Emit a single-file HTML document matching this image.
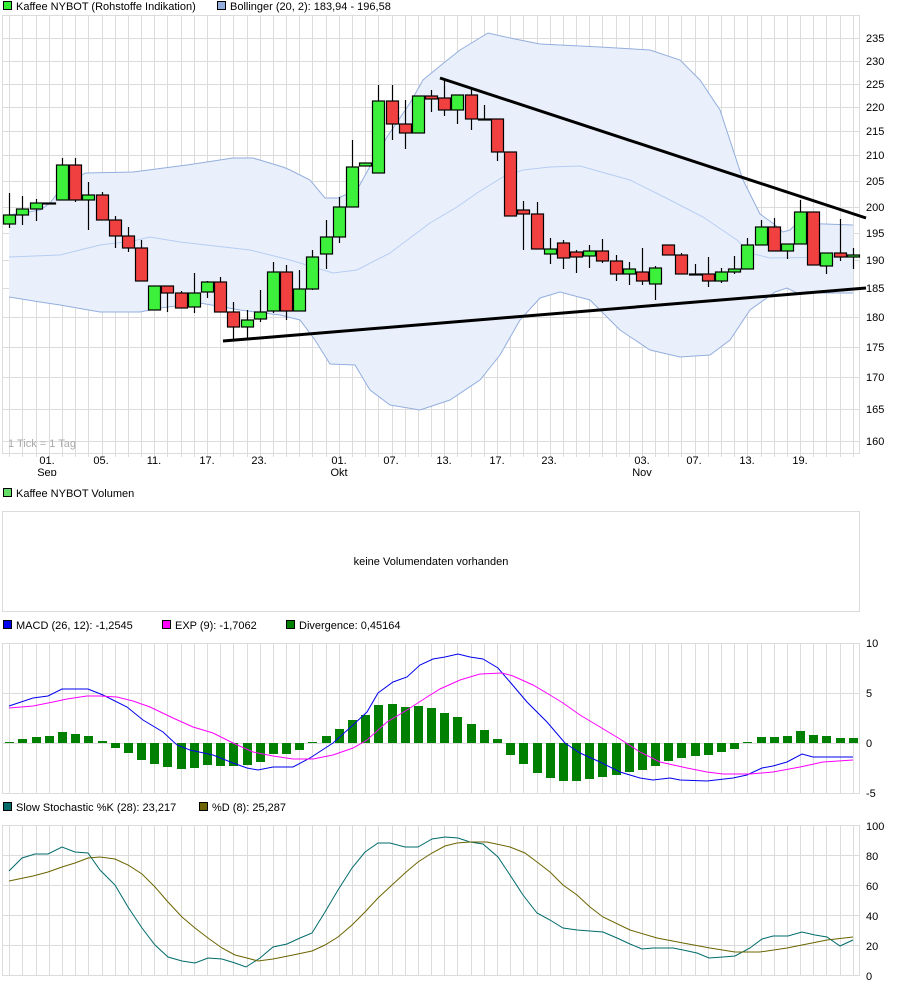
<!DOCTYPE html>
<html><head><meta charset="utf-8"><style>
html,body{margin:0;padding:0;background:#fff;width:907px;height:986px;overflow:hidden}
svg{display:block;font-family:"Liberation Sans",Arial,sans-serif;font-size:11px}
</style></head><body>
<svg id="s" width="907" height="986" viewBox="0 0 907 986" xmlns="http://www.w3.org/2000/svg">
<defs><clipPath id="dc"><rect x="0" y="453" width="907" height="23"/></clipPath></defs>
<g id="grid"></g>
<polygon id="band" fill="#e9f0fb" stroke="none"/>
<polyline id="bu" fill="none" stroke="#94aede" stroke-width="1"/>
<polyline id="bl" fill="none" stroke="#94aede" stroke-width="1"/>
<polyline id="bm" fill="none" stroke="#b6cdf4" stroke-width="1"/>
<g id="candles"></g>
<line x1="440" y1="78" x2="866" y2="218" stroke="#000" stroke-width="3"/>
<line x1="223" y1="341" x2="866" y2="288" stroke="#000" stroke-width="3"/>
<g id="macd"></g>
<polyline id="ml" fill="none" stroke="#0000ee" stroke-width="1"/>
<polyline id="el" fill="none" stroke="#ff00ff" stroke-width="1"/>
<polyline id="kl" fill="none" stroke="#006b6b" stroke-width="1"/>
<polyline id="dl" fill="none" stroke="#6b6400" stroke-width="1"/>

<!-- legends -->
<rect x="3.5" y="1.5" width="8" height="8" fill="#33ee33" stroke="#000"/>
<text x="16" y="10">Kaffee NYBOT (Rohstoffe Indikation)</text>
<rect x="217.5" y="1.5" width="8" height="8" fill="#94aede" stroke="#000"/>
<text x="230" y="10">Bollinger (20, 2): 183,94 - 196,58</text>
<text x="8" y="447" fill="#aaa">1 Tick = 1 Tag</text>

<rect x="3.5" y="488.5" width="8" height="8" fill="#66dd66" stroke="#000"/>
<text x="16" y="497">Kaffee NYBOT Volumen</text>
<rect x="2.5" y="511.5" width="857" height="100" fill="none" stroke="#dcdcdc"/>
<text x="431" y="565" text-anchor="middle">keine Volumendaten vorhanden</text>

<rect x="3.5" y="620.5" width="8" height="8" fill="#0000ee" stroke="#000"/>
<text x="16" y="629">MACD (26, 12): -1,2545</text>
<rect x="162.5" y="620.5" width="8" height="8" fill="#ff00ff" stroke="#000"/>
<text x="175" y="629">EXP (9): -1,7062</text>
<rect x="286.5" y="620.5" width="8" height="8" fill="#008000" stroke="#000"/>
<text x="299" y="629">Divergence: 0,45164</text>

<rect x="3.5" y="802.5" width="8" height="8" fill="#006b6b" stroke="#000"/>
<text x="16" y="811">Slow Stochastic %K (28): 23,217</text>
<rect x="199.5" y="802.5" width="8" height="8" fill="#6b6400" stroke="#000"/>
<text x="212" y="811">%D (8): 25,287</text>

<g id="labels">
<text x="866" y="42">235</text><text x="866" y="65">230</text><text x="866" y="88">225</text><text x="866" y="111">220</text>
<text x="866" y="135">215</text><text x="866" y="159">210</text><text x="866" y="185">205</text><text x="866" y="211">200</text>
<text x="866" y="237">195</text><text x="866" y="264">190</text><text x="866" y="292">185</text><text x="866" y="321">180</text>
<text x="866" y="351">175</text><text x="866" y="381">170</text><text x="866" y="413">165</text><text x="866" y="445">160</text>
<text x="866" y="647">10</text><text x="866" y="697">5</text><text x="866" y="747">0</text><text x="866" y="797">-5</text>
<text x="866" y="830">100</text><text x="866" y="860">80</text><text x="866" y="890">60</text><text x="866" y="920">40</text>
<text x="866" y="950">20</text><text x="866" y="980">0</text>
</g>
<g clip-path="url(#dc)" text-anchor="middle">
<text x="47" y="464">01.</text><text x="47" y="476">Sep</text>
<text x="101" y="464">05.</text><text x="154" y="464">11.</text><text x="207" y="464">17.</text><text x="259" y="464">23.</text>
<text x="339" y="464">01.</text><text x="339" y="476">Okt</text>
<text x="391" y="464">07.</text><text x="444" y="464">13.</text><text x="497" y="464">17.</text><text x="549" y="464">23.</text>
<text x="642" y="464">03.</text><text x="642" y="476">Nov</text>
<text x="694" y="464">07.</text><text x="747" y="464">13.</text><text x="800" y="464">19.</text>
</g>
</svg>
<script>
var NS="http://www.w3.org/2000/svg";
function el(p,t,a){var e=document.createElementNS(NS,t);for(var k in a)e.setAttribute(k,a[k]);p.appendChild(e);return e;}
function X(i){return 9.3+13.18*i;}
var g=document.getElementById('grid');
var G="#dcdcdc";
function panel(y0,y1,hs){
  for(var i=0;i<65;i++){var x=Math.round(X(i))+0.5;el(g,'line',{x1:x,y1:y0,x2:x,y2:y1,stroke:G});}
  hs.forEach(function(h){el(g,'line',{x1:2,y1:h+.5,x2:860,y2:h+.5,stroke:G});});
  el(g,'rect',{x:2.5,y:y0+.5,width:857,height:y1-y0,fill:'none',stroke:G});
}
panel(15,453,[38,61,84,107,131,155,181,207,233,260,288,317,347,377,409,441]);
for(var i=0;i<65;i++){var x=Math.round(X(i))+0.5;el(g,'line',{x1:x,y1:453,x2:x,y2:457,stroke:G});}
panel(643,793,[693,743]);
panel(825,975,[855,885,915,945]);
function pts(a){return a.map(function(p){return p[0]+','+p[1];}).join(' ');}
var up=[[9,215],[40,210],[50,203],[60,190],[85,173],[133,172],[187,165],[233,158],[253,158],[283,167],[290,170],[310,180],[325,198],[338,198],[357,190],[368,170],[387,137],[410,103],[423,80],[440,66],[460,50],[488,33],[510,38],[540,44],[600,47],[650,50],[680,60],[700,80],[720,110],[743,180],[760,214],[774,224],[783,232],[790,230],[797,223],[853,225]];
var lo=[[9,297],[40,302],[60,305],[100,312],[140,312],[160,308],[200,303],[240,310],[280,315],[300,320],[315,340],[330,364],[355,365],[370,390],[390,405],[420,410],[450,400],[480,380],[500,355],[520,320],[540,298],[560,292],[590,300],[620,330],[650,350],[680,357],[710,355],[730,340],[750,310],[775,292],[787,288],[797,293],[853,293]];
var mid=[[9,257],[60,255],[100,245],[133,241],[150,237],[180,242],[250,250],[290,260],[300,263],[333,273],[357,270],[390,253],[430,223],[457,207],[477,193],[503,177],[523,170],[550,167],[580,166],[630,180],[670,200],[703,217],[737,240],[750,253],[770,258],[853,257]];
document.getElementById('bu').setAttribute('points',pts(up));
document.getElementById('bl').setAttribute('points',pts(lo));
document.getElementById('bm').setAttribute('points',pts(mid));
document.getElementById('band').setAttribute('points',pts(up.concat(lo.slice().reverse())));
// candles: [o_top,body_bottom,high,low,green]
var C=[[215,224,193,228,1],[209,215,196,225,1],[203,209,199,221,1],[203,204,203,204,1],[165,200,158,200,1],[165,200,158,202,0],[195,200,182,230,1],[195,220,192,220,0],[220,236,216,248,0],[236,248,227,252,0],[248,281,240,281,0],[286,310,286,310,1],[286,293,286,312,0],[293,308,291,308,0],[293,307,273,313,1],[282,292,281,298,1],[282,312,277,312,0],[312,327,302,340,0],[320,327,310,340,1],[312,319,290,322,1],[272,311,262,313,1],[272,311,265,320,0],[289,311,270,311,1],[257,289,250,290,1],[237,254,220,269,1],[207,237,197,243,1],[167,207,140,207,1],[163,166,163,166,1],[101,173,85,173,1],[101,124,85,140,0],[124,133,100,149,0],[96,133,96,133,1],[96,99,90,112,0],[98,110,80,116,0],[95,110,95,124,1],[95,119,88,130,0],[119,120,105,120,0],[119,152,119,161,0],[152,216,152,216,0],[210,214,201,250,0],[214,249,202,249,0],[249,254,238,264,1],[243,258,240,269,0],[252,257,250,273,0],[251,256,245,268,1],[251,261,239,263,0],[261,274,255,281,0],[269,274,262,285,1],[272,281,248,285,0],[268,284,266,300,1],[245,255,245,255,0],[255,274,253,274,0],[274,275,264,275,0],[274,281,257,287,0],[272,281,268,283,1],[269,272,256,274,1],[245,269,238,269,1],[227,245,220,245,1],[227,251,218,251,0],[244,251,244,259,1],[212,244,200,244,1],[212,265,212,265,0],[253,266,253,274,1],[253,257,219,261,0],[255,257,248,269,1]];
var cg=document.getElementById('candles');
C.forEach(function(c,i){var x=Math.round(X(i))+0.5;
 el(cg,'line',{x1:x,y1:c[2],x2:x,y2:c[3],stroke:'#000','stroke-width':1.2});
 var h=Math.max(c[1]-c[0],1);
 el(cg,'rect',{x:x-6,y:c[0],width:12,height:h,fill:c[4]?'#3cf03c':'#f04040',stroke:'#000','stroke-width':1.2});
});
// MACD divergence bars: y of bar end
var D=[742,739,737,736,732,734,736,741,748,753,760,764,767,769,768,765,766,766,765,762,754,754,750,742,736,729,720,715,705,704,707,706,708,713,717,724,730,739,755,764,773,778,781,781,779,777,775,772,770,766,761,758,756,755,752,749,742,737,737,736,731,735,736,738,738];
var mg=document.getElementById('macd');
D.forEach(function(v,i){var x=Math.round(X(i));var a=Math.min(v,743),b=Math.max(v,743);
 el(mg,'rect',{x:x-4,y:a,width:9,height:Math.max(b-a,1),fill:'#008000'});});
document.getElementById('ml').setAttribute('points',pts([[9,706],[33,698],[48,696],[62,689],[88,689],[103,695],[127,707],[143,720],[163,732],[177,745],[190,750],[213,755],[233,763],[247,768],[258,770],[273,767],[293,767],[310,758],[333,743],[353,725],[367,712],[378,693],[393,682],[407,677],[420,665],[433,659],[445,657],[458,654],[470,657],[483,659],[498,668],[510,682],[527,702],[547,722],[565,743],[580,753],[600,762],[620,772],[640,778],[653,780],[670,778],[680,780],[707,781],[733,778],[747,775],[762,768],[773,766],[787,762],[802,754],[813,757],[853,757]]));
document.getElementById('el').setAttribute('points',pts([[9,708],[33,706],[53,702],[67,699],[87,696],[100,696],[117,697],[133,701],[150,707],[173,718],[193,727],[213,733],[233,743],[253,752],[273,756],[293,759],[313,759],[333,755],[353,748],[367,740],[387,722],[407,710],[427,697],[440,689],[460,680],[480,674],[502,673],[513,676],[533,685],[550,695],[563,703],[580,715],[600,727],[620,739],[640,752],[660,762],[687,768],[707,772],[723,774],[750,774],[773,772],[800,767],[823,762],[853,760]]));
document.getElementById('kl').setAttribute('points',pts([[9,871],[22,858],[35,854],[48,854],[62,847],[75,852],[88,853],[100,870],[115,885],[128,907],[142,928],[155,945],[168,957],[182,961],[195,963],[208,958],[222,959],[235,963],[246,967],[260,958],[273,947],[287,944],[300,938],[312,933],[325,912],[338,890],[352,868],[365,852],[378,843],[390,843],[405,847],[418,847],[432,839],[445,837],[458,838],[470,842],[483,844],[498,857],[510,875],[523,895],[537,913],[550,920],[563,928],[577,930],[603,932],[617,938],[630,944],[642,949],[653,948],[673,948],[683,950],[697,953],[709,958],[723,957],[735,956],[750,948],[762,939],[773,936],[788,936],[802,932],[815,935],[827,937],[840,946],[853,940]]));
document.getElementById('dl').setAttribute('points',pts([[9,881],[33,876],[48,872],[62,867],[75,863],[88,858],[100,857],[115,859],[128,865],[142,874],[155,887],[168,902],[182,917],[195,928],[208,938],[222,948],[235,955],[247,958],[258,961],[273,959],[293,955],[312,951],[325,945],[338,937],[352,925],[365,912],[378,898],[392,885],[405,873],[418,862],[432,853],[445,846],[457,843],[470,842],[487,842],[510,847],[525,853],[537,862],[550,872],[563,885],[577,895],[590,907],[603,917],[630,930],[657,938],[683,943],[710,948],[735,952],[760,952],[787,948],[807,944],[827,940],[853,937]]));
</script>
</body></html>
